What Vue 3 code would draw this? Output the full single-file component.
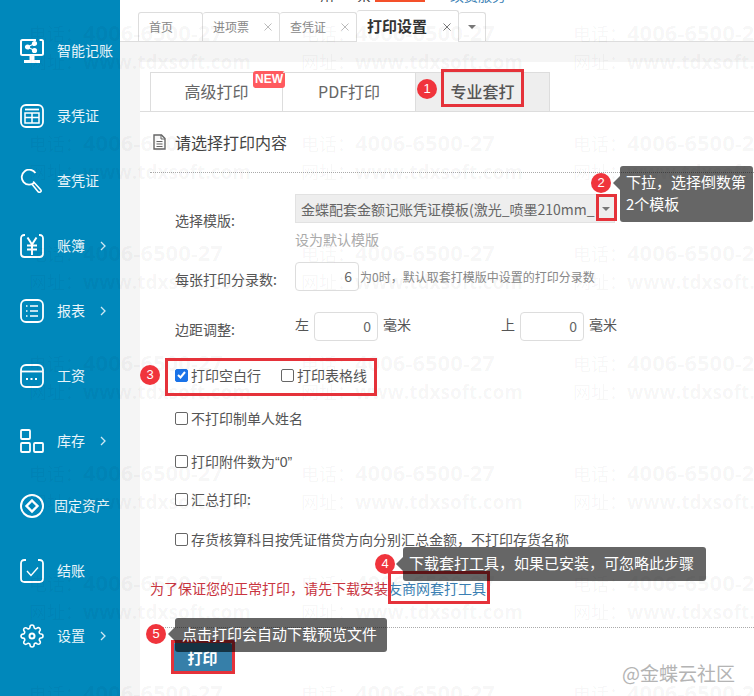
<script setup>
const nav = [
  { label: "智能记账", icon: "monitor" },
  { label: "录凭证", icon: "voucher" },
  { label: "查凭证", icon: "search" },
  { label: "账簿", icon: "yen", more: true },
  { label: "报表", icon: "list", more: true },
  { label: "工资", icon: "calendar" },
  { label: "库存", icon: "blocks", more: true },
  { label: "固定资产", icon: "diamond", tight: true },
  { label: "结账", icon: "check" },
  { label: "设置", icon: "gear", more: true },
];

const tabs = [
  { label: "首页", cls: "t-home" },
  { label: "进项票", cls: "t-normal", close: true },
  { label: "查凭证", cls: "t-normal", close: true },
  { label: "打印设置", cls: "t-active", close: true },
];

const options = [
  { label: "不打印制单人姓名", cls: "gap-a" },
  { label: "打印附件数为", quoted: "“0”", cls: "gap-a" },
  { label: "汇总打印:", cls: "gap-b" },
  { label: "存货核算科目按凭证借贷方向分别汇总金额，不打印存货名称", cls: "gap-c" },
];

const marks = [];
for (let r = 0; r < 7; r++) {
  for (let c = 0; c < 3; c++) marks.push(`${r}-${c}`);
}
</script>

<template>
  <div class="page">
    <aside class="side">
      <div v-for="item in nav" :key="item.label" class="nav-item" :class="{ tight: item.tight }">
        <svg class="nav-icon" viewBox="0 0 24 24" fill="none" stroke="#fff" stroke-width="1.8">
          <template v-if="item.icon === 'monitor'">
            <path d="M16 1H2.500Q1 1 1 2.500V14.500Q1 16 2.500 16H21.500Q23 16 23 14.500V2.500Q23 1 21.500 1H19.500" stroke-width="2" />
            <circle cx="7.500" cy="8" r="1.700" fill="#fff" />
            <circle cx="14.500" cy="4.500" r="1.700" fill="#fff" />
            <circle cx="14.500" cy="11.500" r="1.700" fill="#fff" />
            <path d="M7.500 8L14.500 4.500M7.500 8L14.500 11.500" stroke-width="1.200" />
            <path d="M12 17V21" stroke-width="5" />
            <path d="M4 22.500H20" stroke-width="3" />
          </template>
          <template v-else-if="item.icon === 'voucher'">
            <rect x="1" y="1" width="22" height="22" rx="5" />
            <path d="M5 5.500H19" />
            <rect x="5" y="9" width="14" height="10" stroke-width="1.500" />
            <path d="M5 13.500H19M12 9V19" stroke-width="1.500" />
          </template>
          <template v-else-if="item.icon === 'search'">
            <path d="M14.500 13.500A7.500 7.500 0 1 1 15.500 4" />
            <path d="M13.200 12.500L20.500 20.500Q22 22.200 20.300 23T17.500 22L12 15.200" stroke-width="1.600" />
          </template>
          <template v-else-if="item.icon === 'yen'">
            <path d="M5 1H4.500Q1 1 1 4.500V19.500Q1 23 4.500 23H19.500Q23 23 23 19.500V4.500Q23 1 19.500 1H19" />
            <path d="M7.500 3.500L12 10.500L16.500 3.500M7 11.500H17M7 15.500H17M12 10.500V21" stroke-width="2" />
          </template>
          <template v-else-if="item.icon === 'list'">
            <rect x="1" y="1" width="22" height="22" rx="5" />
            <path d="M6 7H7.500M10 7H18M6 12H7.500M10 12H18M6 17H7.500M10 17H18" stroke-width="1.600" />
          </template>
          <template v-else-if="item.icon === 'calendar'">
            <rect x="1" y="1" width="22" height="22" rx="5" />
            <path d="M1 7.500H23" />
            <path d="M6 15H8M10.500 15H12.500M15 15H17" stroke-width="2" />
          </template>
          <template v-else-if="item.icon === 'blocks'">
            <rect x="1" y="1" width="9" height="9" rx="1" />
            <rect x="1" y="14" width="9" height="9" rx="1" />
            <rect x="14" y="14" width="9" height="9" rx="1" />
          </template>
          <template v-else-if="item.icon === 'diamond'">
            <circle cx="12" cy="12" r="11" stroke-width="2" />
            <path d="M12 6.500L17.500 12L12 17.500L6.500 12Z" stroke-width="2.400" />
          </template>
          <template v-else-if="item.icon === 'check'">
            <path d="M6 1H4.500Q1 1 1 4.500V19.500Q1 23 4.500 23H19.500Q23 23 23 19.500V4.500Q23 1 19.500 1H18" />
            <path d="M7 12L11 16.500L18 8.500" stroke-width="1.400" />
          </template>
          <template v-else>
            <path d="M19.400 15a1.650 1.650 0 0 0 .33 1.820l.06.06a2 2 0 0 1 0 2.830 2 2 0 0 1-2.830 0l-.06-.06a1.650 1.650 0 0 0-1.820-.33 1.650 1.650 0 0 0-1 1.510V21a2 2 0 0 1-2 2 2 2 0 0 1-2-2v-.09A1.650 1.650 0 0 0 9 19.400a1.650 1.650 0 0 0-1.820.33l-.06.06a2 2 0 0 1-2.830 0 2 2 0 0 1 0-2.830l.06-.06a1.650 1.650 0 0 0 .33-1.820 1.650 1.650 0 0 0-1.510-1H3a2 2 0 0 1-2-2 2 2 0 0 1 2-2h.09A1.650 1.650 0 0 0 4.600 9a1.650 1.650 0 0 0-.33-1.820l-.06-.06a2 2 0 0 1 0-2.830 2 2 0 0 1 2.830 0l.06.06a1.650 1.650 0 0 0 1.820.33H9a1.650 1.650 0 0 0 1-1.510V3a2 2 0 0 1 2-2 2 2 0 0 1 2 2v.09a1.650 1.650 0 0 0 1 1.510 1.650 1.650 0 0 0 1.820-.33l.06-.06a2 2 0 0 1 2.830 0 2 2 0 0 1 0 2.830l-.06.06a1.650 1.650 0 0 0-.33 1.820V9a1.650 1.650 0 0 0 1.510 1H21a2 2 0 0 1 2 2 2 2 0 0 1-2 2h-.09a1.650 1.650 0 0 0-1.510 1z" stroke-width="1.600" />
            <circle cx="12" cy="12" r="2.500" stroke-width="2" />
          </template>
        </svg>
        <span class="nav-label">{{ item.label }}</span>
        <svg v-if="item.more" class="nav-more" viewBox="0 0 6 10" fill="none" stroke="#cde8f3" stroke-width="1.300">
          <path d="M1 1L5 5L1 9" />
        </svg>
      </div>
    </aside>

    <main class="main">
      <div class="tabs-bar">
        <div class="top-sliver">
          <span class="sliver-dark first">用户：</span>
          <span class="sliver-dark second">余额</span>
          <span class="sliver-red"></span>
          <span class="sliver-blue">续费服务</span>
        </div>
        <div class="tabs">
          <div v-for="tab in tabs" :key="tab.label" class="tab" :class="tab.cls">
            <span class="tab-label">{{ tab.label }}</span>
            <svg v-if="tab.close" class="tab-close" width="8" height="8" viewBox="0 0 8 8" fill="none">
              <path d="M0.500 0.500L7.500 7.500M7.500 0.500L0.500 7.500" />
            </svg>
          </div>
          <div class="tab tab-more"><i class="caret"></i></div>
        </div>
      </div>

      <div class="body">
        <div class="content">
          <div class="print-tabs">
            <div class="print-tab"><span class="print-tab-text">高级打印</span><span class="new-tag">NEW</span></div>
            <div class="print-tab"><span class="print-tab-text">PDF打印</span></div>
            <div class="print-tab current"><span class="print-tab-text">专业套打</span></div>
          </div>

          <div class="heading">
            <svg width="13" height="16" viewBox="0 0 13 16" fill="none">
              <path d="M1 1H8.500L12 4.500V15H1Z" fill="#fff" stroke="#666" stroke-width="1.400" />
              <path d="M8 1V5H12" stroke="#666" />
              <path d="M3.500 7.500H9.500M3.500 10H9.500M3.500 12.500H9.500" stroke="#666" />
            </svg>
            <span>请选择打印内容</span>
          </div>

          <form class="form" @submit.prevent>
            <div class="row row-template">
              <label class="row-label template-label">选择模版:</label>
              <div>
                <div class="select">
                  <span class="select-text">金蝶配套金额记账凭证模板(激光_喷墨210mm_</span>
                  <i class="caret"></i>
                </div>
                <div class="set-default">设为默认模版</div>
              </div>
            </div>

            <div class="row row-count">
              <label class="row-label input-label">每张打印分录数:</label>
              <div class="control-line">
                <div class="num">6</div>
                <span class="hint">为0时，默认取套打模版中设置的打印分录数</span>
              </div>
            </div>

            <div class="row row-margin">
              <label class="row-label input-label">边距调整:</label>
              <div class="control-line">
                <span class="unit-side">左</span>
                <div class="num">0</div>
                <span class="unit">毫米</span>
                <span class="unit-side second-side">上</span>
                <div class="num">0</div>
                <span class="unit">毫米</span>
              </div>
            </div>

            <div class="check-row first-check">
              <span class="check on">
                <svg width="9" height="8" viewBox="0 0 9 8" fill="none"><path d="M1 4L3.500 6.500L8 1" stroke="#fff" stroke-width="2" /></svg>
              </span>
              <span>打印空白行</span>
              <span class="check next-check"></span>
              <span>打印表格线</span>
            </div>
            <div v-for="opt in options" :key="opt.label" class="check-row" :class="opt.cls">
              <span class="check"></span>
              <span>{{ opt.label }}<span v-if="opt.quoted" class="latin">{{ opt.quoted }}</span></span>
            </div>
          </form>

          <p class="notice">为了保证您的正常打印，请先下载安装<a class="notice-link">友商网套打工具</a></p>
          <div class="actions">
            <button class="print-btn" type="button">打印</button>
          </div>
        </div>
      </div>
    </main>

    <!-- watermark, sits over everything -->
    <div class="watermark">
      <div v-for="m in marks" :key="m" class="mark">
        <div class="mark-line"><span class="mark-cjk">电话：</span>4006-6500-27</div>
        <div class="mark-line site"><span class="mark-cjk">网址：</span>www.tdxsoft.com</div>
      </div>
    </div>

    <!-- tutorial annotations -->
    <div class="red-box box-1"></div>
    <div class="red-box box-2"></div>
    <div class="red-box box-3"></div>
    <div class="red-box box-4"></div>
    <div class="red-box box-5"></div>

    <div class="tip tip-2">下拉，选择倒数第<br />2个模板</div>
    <div class="tip tip-4">下载套打工具，如果已安装，可忽略此步骤</div>
    <div class="tip tip-5">点击打印会自动下载预览文件</div>

    <span class="badge badge-1">1</span>
    <span class="badge badge-2">2</span>
    <span class="badge badge-3">3</span>
    <span class="badge badge-4">4</span>
    <span class="badge badge-5">5</span>

    <div class="credit">@金蝶云社区</div>
  </div>
</template>

<style>
html,
body {
  margin: 0;
  background: #fff;
}
</style>

<style scoped>
.page {
  position: relative;
  display: flex;
  width: 754px;
  height: 696px;
  overflow: hidden;
  font-family: "Noto Sans CJK SC", "Liberation Sans", sans-serif;
  font-size: 14px;
  color: #555;
}

/* sidebar */
.side {
  flex: none;
  width: 120px;
  padding-top: 18px;
  box-sizing: border-box;
  background: #0088bb;
}
.nav-item {
  display: flex;
  align-items: center;
  height: 65px;
  padding-left: 20px;
  color: #e8f5fa;
}
.nav-icon {
  flex: none;
  width: 24px;
  height: 24px;
  margin-right: 13px;
}
.tight .nav-icon {
  margin-right: 10px;
}
.nav-label {
  padding-bottom: 2px;
  line-height: 20px;
  white-space: nowrap;
}
.nav-more {
  width: 6px;
  height: 10px;
  margin-left: auto;
  margin-right: 14px;
}

/* tabs */
.main {
  flex: 1;
  display: flex;
  flex-direction: column;
  min-width: 0;
}
.tabs-bar {
  height: 42px;
  box-sizing: border-box;
  border-bottom: 1px solid #ddd;
  background: #fff;
}
.top-sliver {
  display: flex;
  height: 10px;
  overflow: hidden;
  padding-left: 200px;
  line-height: 14px;
  font-size: 14px;
}
.sliver-dark {
  height: 14px;
  margin-top: -12px;
  overflow: hidden;
  color: #444;
}
.sliver-dark.first {
  width: 37px;
}
.sliver-dark.second {
  width: 18px;
}
.sliver-red {
  width: 50px;
  height: 2px;
  background: #f4502a;
}
.sliver-blue {
  margin: -12px 0 0 25px;
  height: 14px;
  color: #3a7fb5;
}
.tabs {
  display: flex;
  align-items: flex-end;
  height: 31px;
  padding-left: 18px;
}
.tab {
  display: flex;
  align-items: center;
  box-sizing: border-box;
  height: 29px;
  padding-left: 10px;
  border: 1px solid #ddd;
  border-bottom: none;
  border-left: none;
  border-radius: 3px 3px 0 0;
  font-size: 12px;
  color: #888;
}
.tab-label {
  padding-bottom: 2px;
}
.t-home {
  width: 65px;
  border-left: 1px solid #ddd;
}
.t-normal {
  width: 77px;
}
.t-active {
  width: 102px;
  height: 32px;
  margin-bottom: -1px;
  font-size: 15px;
  font-weight: 700;
  color: #333;
  background: #fff;
}
.tab-close {
  margin-left: auto;
  margin-right: 7px;
  stroke: #bbb;
}
.t-active .tab-close {
  stroke: #777;
}
.tab-more {
  width: 27px;
  justify-content: center;
  padding: 0;
}
.caret {
  display: block;
  width: 0;
  height: 0;
  border: 4px solid transparent;
  border-top: 4px solid #777;
  border-bottom: none;
}

/* body */
.body {
  flex: 1;
  padding: 20px 0 0 20px;
  background: #f5f5f5;
}
.content {
  height: 100%;
  background: #fff;
  padding-top: 10px;
  box-sizing: border-box;
}
.print-tabs {
  display: flex;
  height: 40px;
  box-sizing: border-box;
  padding-left: 10px;
  border-bottom: 1px solid #ddd;
}
.print-tab {
  position: relative;
  display: flex;
  align-items: center;
  justify-content: center;
  box-sizing: border-box;
  width: 133px;
  border: 1px solid #ddd;
  border-bottom: none;
  border-left: none;
  font-size: 16px;
  color: #666;
}
.print-tab:first-child {
  border-left: 1px solid #ddd;
}
.print-tab-text {
  padding-bottom: 2px;
}
.print-tab.current {
  width: 134px;
  background: #eee;
  color: #555;
  font-weight: 500;
}
.new-tag {
  position: absolute;
  right: -3px;
  top: -2px;
  padding: 0 2px;
  height: 17px;
  line-height: 17px;
  border-radius: 3px;
  background: #ff5a5f;
  color: #fff;
  font-size: 12px;
  font-weight: 700;
  font-family: "Liberation Sans", sans-serif;
}
.heading {
  display: flex;
  align-items: center;
  gap: 9px;
  height: 30px;
  margin: 15px 0 15px;
  padding-left: 13px;
  font-size: 16px;
  color: #444;
  line-height: 28px;
}
.form {
  margin-left: 10px;
  padding: 0 0 0 25px;
  border-top: 1px dotted #aaa;
}
.row {
  display: grid;
  grid-template-columns: 120px 1fr;
}
.row-label {
  line-height: 20px;
  color: #555;
}
.row-template {
  margin-top: 21px;
}
.template-label {
  padding-top: 16px;
}
.input-label {
  padding-top: 7px;
}
.select {
  display: flex;
  align-items: center;
  justify-content: space-between;
  box-sizing: border-box;
  width: 320px;
  height: 29px;
  padding: 0 4px 0 5px;
  border: 1px solid #e2e2e2;
  background: #eee;
  color: #666;
  overflow: hidden;
}
.select-text {
  white-space: nowrap;
  overflow: hidden;
}
.select .caret {
  flex: none;
  margin-left: 4px;
}
.set-default {
  margin-top: 6px;
  line-height: 20px;
  color: #aaa;
}
.row-count {
  margin-top: 13px;
}
.row-margin {
  margin-top: 21px;
}
.control-line {
  display: flex;
  align-items: center;
  height: 29px;
}
.num {
  box-sizing: border-box;
  width: 64px;
  height: 29px;
  line-height: 27px;
  padding-right: 6px;
  border: 1px solid #ddd;
  border-radius: 4px;
  text-align: right;
  color: #666;
  font-size: 14px;
}
.hint {
  margin-left: 1px;
  font-size: 12px;
  color: #888;
  white-space: nowrap;
}
.unit-side {
  width: 19px;
  margin-top: -6px;
}
.second-side {
  margin-left: 90px;
}
.unit {
  margin-left: 5px;
  margin-top: -6px;
}
.check-row {
  display: flex;
  align-items: center;
  height: 20px;
  line-height: 18px;
  color: #555;
}
.latin {
  font-family: "Liberation Sans", sans-serif;
}
.first-check {
  margin-top: 24px;
}
.gap-a {
  margin-top: 23px;
}
.gap-b {
  margin-top: 18px;
}
.gap-c {
  margin-top: 20px;
}
.check {
  display: flex;
  align-items: center;
  justify-content: center;
  box-sizing: border-box;
  flex: none;
  width: 13px;
  height: 13px;
  margin-right: 3px;
  border: 1px solid #666;
  border-radius: 2px;
  background: #fff;
}
.check.on {
  border-color: #1a73e8;
  background: #1a73e8;
}
.next-check {
  margin-left: 20px;
}
.notice {
  margin: 29px 0 29px 10px;
  line-height: 20px;
  color: #c9353f;
}
.notice-link {
  color: #3b7fb3;
}
.actions {
  margin-left: 10px;
  padding: 15px 0 0 23px;
  border-top: 1px dotted #aaa;
}
.print-btn {
  display: block;
  width: 59px;
  height: 29px;
  padding: 0;
  border: none;
  border-radius: 2px;
  background: #367fa9;
  color: #fff;
  font: 700 15px "Noto Sans CJK SC", sans-serif;
}

/* watermark */
.watermark {
  position: absolute;
  left: 29px;
  top: 18px;
  display: grid;
  grid-template-columns: repeat(3, 272px);
  grid-auto-rows: 110px;
  pointer-events: none;
}
.mark-line {
  height: 29px;
  line-height: 29px;
  font-family: "Open Sans", sans-serif;
  font-size: 22px;
  font-weight: 700;
  color: rgba(0, 0, 0, 0.045);
  white-space: nowrap;
}
.mark-line.site {
  font-size: 19px;
}
.mark-cjk {
  font-family: "Noto Sans CJK SC", sans-serif;
  font-size: 18px;
  font-weight: 400;
}

/* annotations */
.red-box {
  position: absolute;
  box-sizing: border-box;
  border: 3px solid #e5323a;
}
.box-1 {
  left: 441px;
  top: 69px;
  width: 83px;
  height: 38px;
}
.box-2 {
  left: 596px;
  top: 194px;
  width: 21px;
  height: 27px;
}
.box-3 {
  left: 165px;
  top: 358px;
  width: 212px;
  height: 38px;
}
.box-4 {
  left: 388px;
  top: 571px;
  width: 102px;
  height: 33px;
}
.box-5 {
  left: 171px;
  top: 640px;
  width: 64px;
  height: 34px;
}
.tip {
  position: absolute;
  box-sizing: border-box;
  border-radius: 3px;
  background: rgba(0, 0, 0, 0.6);
  color: #fff;
  font-size: 15px;
  white-space: nowrap;
}
.tip::before {
  content: "";
  position: absolute;
  left: -7px;
  border: 7px solid transparent;
  border-left: none;
  border-right-color: rgba(0, 0, 0, 0.6);
}
.tip-2 {
  left: 620px;
  top: 166px;
  width: 133px;
  height: 56px;
  padding: 5px 6px;
  line-height: 22px;
}
.tip-2::before {
  top: 10px;
}
.tip-4 {
  left: 403px;
  top: 547px;
  width: 303px;
  height: 34px;
  padding-left: 6px;
  line-height: 32px;
}
.tip-4::before {
  top: 10px;
}
.tip-5 {
  left: 175px;
  top: 618px;
  width: 212px;
  height: 34px;
  padding-left: 7px;
  line-height: 32px;
}
.tip-5::before {
  top: 9px;
}
.badge {
  position: absolute;
  width: 20px;
  height: 20px;
  border-radius: 50%;
  background: #f0343c;
  color: #fff;
  font-size: 13px;
  line-height: 20px;
  text-align: center;
  font-family: "Liberation Sans", sans-serif;
}
.badge-1 {
  left: 417px;
  top: 79px;
}
.badge-2 {
  left: 591px;
  top: 173px;
}
.badge-3 {
  left: 140px;
  top: 365px;
}
.badge-4 {
  left: 375px;
  top: 554px;
}
.badge-5 {
  left: 146px;
  top: 624px;
}
.credit {
  position: absolute;
  left: 622px;
  top: 659px;
  font-size: 19px;
  line-height: 28px;
  color: #b4b4b4;
}
</style>
